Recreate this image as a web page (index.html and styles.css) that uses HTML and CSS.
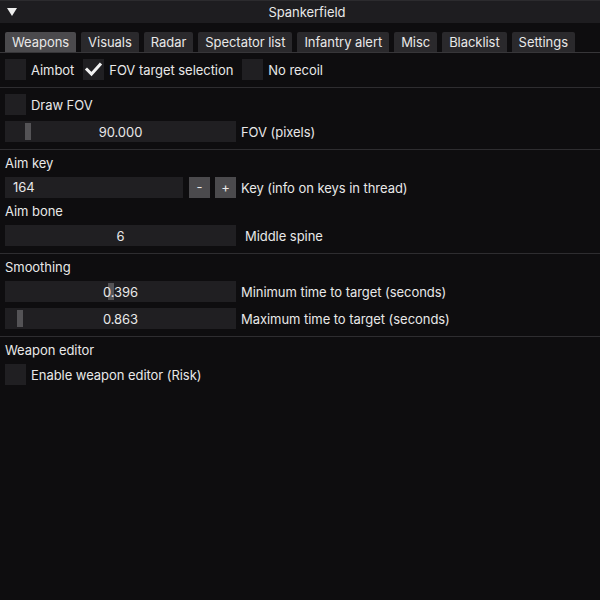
FILE: index.html
```html
<!DOCTYPE html>
<html lang="en">
<head>
    <meta charset="UTF-8">
    <title>Spankerfield</title>
    <link rel="stylesheet" href="styles.css">
</head>
<body>
    <div class="window">
        <div class="titlebar">
            <span class="collapse"></span>
            <span class="title">Spankerfield</span>
        </div>

        <div class="tabbar">
            <div class="tab active">Weapons</div>
            <div class="tab">Visuals</div>
            <div class="tab">Radar</div>
            <div class="tab">Spectator list</div>
            <div class="tab">Infantry alert</div>
            <div class="tab">Misc</div>
            <div class="tab">Blacklist</div>
            <div class="tab">Settings</div>
        </div>

        <div class="content">
            <div class="row">
                <div class="checkbox"></div>
                <span class="label">Aimbot</span>
                <div class="checkbox checked">
                    <svg width="21" height="21" viewBox="0 0 21 21"><polyline points="4,10.5 8.5,15 17,5.5" fill="none" stroke="#f2f2f2" stroke-width="3" stroke-linecap="square"/></svg>
                </div>
                <span class="label">FOV target selection</span>
                <div class="checkbox"></div>
                <span class="label">No recoil</span>
            </div>

            <div class="separator"></div>

            <div class="row">
                <div class="checkbox"></div>
                <span class="label">Draw FOV</span>
            </div>
            <div class="row">
                <div class="slider">
                    <div class="grab" style="left: 20px"></div>
                    <span class="value">90.000</span>
                </div>
                <span class="label">FOV (pixels)</span>
            </div>

            <div class="separator"></div>

            <div class="heading">Aim key</div>
            <div class="row">
                <div class="input">164</div>
                <div class="step-btn first">-</div>
                <div class="step-btn">+</div>
                <span class="label">Key (info on keys in thread)</span>
            </div>
            <div class="heading">Aim bone</div>
            <div class="row">
                <div class="slider">
                    <span class="value">6</span>
                </div>
                <span class="label wide">Middle spine</span>
            </div>

            <div class="separator"></div>

            <div class="heading">Smoothing</div>
            <div class="row">
                <div class="slider">
                    <div class="grab" style="left: 103px"></div>
                    <span class="value">0.396</span>
                </div>
                <span class="label">Minimum time to target (seconds)</span>
            </div>
            <div class="row">
                <div class="slider">
                    <div class="grab" style="left: 12px"></div>
                    <span class="value">0.863</span>
                </div>
                <span class="label">Maximum time to target (seconds)</span>
            </div>

            <div class="separator"></div>

            <div class="heading">Weapon editor</div>
            <div class="row">
                <div class="checkbox"></div>
                <span class="label">Enable weapon editor (Risk)</span>
            </div>
        </div>
    </div>
</body>
</html>
```

FILE: styles.css
```css
html, body {
    margin: 0;
    padding: 0;
    background: #0e0d0f;
}

body {
    font-family: 'Inter', 'Noto Sans', sans-serif;
    font-size: 13px;
    letter-spacing: -0.05px;
    color: #e8e8e8;
    height: 600px;
}

.titlebar {
    height: 22px;
    background: #1e1d20;
    border-top: 1px solid #2c2b2e;
    display: flex;
    align-items: center;
}

.collapse {
    width: 0;
    height: 0;
    margin-left: 7px;
    border-left: 5px solid transparent;
    border-right: 5px solid transparent;
    border-top: 8px solid #eeeeee;
}

.title {
    flex: 1;
    text-align: center;
    padding-right: 3px;
}

.tabbar {
    display: flex;
    gap: 5px;
    margin-top: 9px;
    padding: 0 5px;
    border-bottom: 1px solid #373639;
}

.tab {
    height: 20px;
    line-height: 20px;
    padding: 0 7px;
    background: #2a292c;
    border-radius: 2px 2px 0 0;
}

.tab.active {
    background: #4b4a4d;
}

.content {
    display: flex;
    flex-direction: column;
    gap: 6px;
    padding: 6px 5px 0 5px;
}

.row {
    display: flex;
    align-items: center;
    height: 21px;
}

.checkbox {
    width: 21px;
    height: 21px;
    background: #201f22;
}

.checkbox + .label {
    margin-left: 5px;
    margin-right: 9px;
}

.label {
    margin-left: 5px;
    white-space: nowrap;
}

.label.wide {
    margin-left: 9px;
}

.separator {
    height: 1px;
    background: #2e2d30;
    margin: 1px -5px 0 -5px;
}

.heading {
    height: 15px;
    line-height: 15px;
}

.slider {
    position: relative;
    width: 231px;
    height: 21px;
    background: #201f22;
    display: flex;
    align-items: center;
    justify-content: center;
}

.grab {
    position: absolute;
    top: 2px;
    bottom: 2px;
    width: 6px;
    background: #545356;
}

.value {
    position: relative;
}

.input {
    width: 170px;
    height: 21px;
    line-height: 21px;
    padding-left: 8px;
    background: #201f22;
}

.step-btn {
    width: 21px;
    height: 21px;
    line-height: 20px;
    text-align: center;
    background: #4b4a4d;
    margin-left: 5px;
}

.step-btn.first {
    margin-left: 6px;
}
```
